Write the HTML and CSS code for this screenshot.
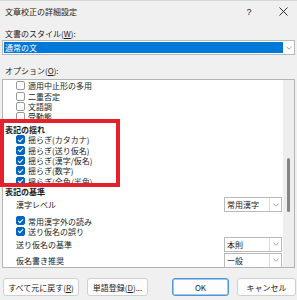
FILE: index.html
```html
<!DOCTYPE html>
<html lang="ja">
<head>
<meta charset="utf-8">
<title>文章校正の詳細設定</title>
<link rel="stylesheet" href="styles.css">
</head>
<body>
<div class="dialog">
  <div class="titlebar">
    <span class="title">文章校正の詳細設定</span>
    <span class="tb-btn help">?</span>
    <span class="tb-btn close"><svg width="9" height="9" viewBox="0 0 9 9"><path d="M0.5 0.5 L8.5 8.5 M8.5 0.5 L0.5 8.5" stroke="#1b1b1b" stroke-width="0.9" fill="none"/></svg></span>
  </div>

  <div class="field-label">文書のスタイル(<u>W</u>):</div>
  <div class="combo main">
    <span class="combo-value selected">通常の文</span>
    <span class="combo-arrow"><svg width="6" height="4" viewBox="0 0 6 4"><path d="M0.5 0.8 L3 3.2 L5.5 0.8" stroke="#8a8a8a" stroke-width="0.8" fill="none"/></svg></span>
  </div>

  <div class="field-label opt">オプション(<u>O</u>):</div>
  <div class="listbox">
    <div class="list-items">
      <div class="row item"><span class="cb"></span>適用中止形の多用</div>
      <div class="row item"><span class="cb"></span>二重否定</div>
      <div class="row item"><span class="cb"></span>文語調</div>
      <div class="row item"><span class="cb"></span>受動態</div>
      <div class="row header first">表記の揺れ</div>
      <div class="row item"><span class="cb on"></span>揺らぎ(カタカナ)</div>
      <div class="row item"><span class="cb on"></span>揺らぎ(送り仮名)</div>
      <div class="row item"><span class="cb on"></span>揺らぎ(漢字/仮名)</div>
      <div class="row item"><span class="cb on"></span>揺らぎ(数字)</div>
      <div class="row item"><span class="cb on"></span>揺らぎ(全角/半角)</div>
      <div class="row header">表記の基準</div>
      <div class="row setting level">
        <span>漢字レベル</span>
        <span class="combo small"><span class="combo-value">常用漢字</span><span class="combo-arrow"><svg width="6" height="4" viewBox="0 0 6 4"><path d="M0.5 0.8 L3 3.2 L5.5 0.8" stroke="#8a8a8a" stroke-width="0.8" fill="none"/></svg></span></span>
      </div>
      <div class="row item after-level"><span class="cb on"></span>常用漢字外の読み</div>
      <div class="row item"><span class="cb on"></span>送り仮名の誤り</div>
      <div class="row setting">
        <span>送り仮名の基準</span>
        <span class="combo small"><span class="combo-value">本則</span><span class="combo-arrow"><svg width="6" height="4" viewBox="0 0 6 4"><path d="M0.5 0.8 L3 3.2 L5.5 0.8" stroke="#8a8a8a" stroke-width="0.8" fill="none"/></svg></span></span>
      </div>
      <div class="row setting last">
        <span>仮名書き推奨</span>
        <span class="combo small"><span class="combo-value">一般</span><span class="combo-arrow"><svg width="6" height="4" viewBox="0 0 6 4"><path d="M0.5 0.8 L3 3.2 L5.5 0.8" stroke="#8a8a8a" stroke-width="0.8" fill="none"/></svg></span></span>
      </div>
    </div>
    <div class="scrollbar"><div class="thumb"></div></div>
  </div>

  <div class="buttons">
    <button class="btn reset">すべて元に戻す(<u>R</u>)</button>
    <button class="btn register">単語登録(<u>D</u>)...</button>
    <button class="btn ok">OK</button>
    <button class="btn cancel">キャンセル</button>
  </div>

  <div class="highlight"></div>
</div>
</body>
</html>
```

FILE: styles.css
```css
html, body {
  margin: 0;
  padding: 0;
}
body {
  width: 297px;
  height: 300px;
  overflow: hidden;
  background: #f0f0f0;
  font-family: "Noto Sans CJK JP", "Noto Sans", sans-serif;
  font-size: 8px;
  color: #1b1b1b;
}
.dialog {
  position: relative;
  width: 297px;
  height: 300px;
}
.titlebar {
  height: 22px;
  display: flex;
  align-items: center;
  padding: 0 6px 0 5px;
  box-sizing: border-box;
  border-top: 1px solid #d6d6d6;
}
.title {
  flex: 1;
  line-height: 11px;
}
.tb-btn {
  width: 16px;
  height: 16px;
  display: flex;
  align-items: center;
  justify-content: center;
}
.help {
  font-family: "Liberation Sans", sans-serif;
  font-size: 9px;
  margin-right: 18px;
}
.field-label {
  height: 11px;
  line-height: 11px;
  padding-left: 5px;
  margin-top: 6px;
}
.field-label.opt {
  margin-top: 10px;
}
.combo {
  display: flex;
  box-sizing: border-box;
  background: #fff;
  border: 1px solid #b9b9b9;
}
.combo.main {
  margin: 1px 0 0 2px;
  width: 293px;
  height: 15px;
  padding: 1px 0 1px 1px;
}
.combo-value {
  flex: 1;
  display: flex;
  align-items: center;
  padding-left: 1px;
  line-height: 11px;
}
.combo-value.selected {
  background: #0078d7;
  color: #fff;
}
.combo-arrow {
  width: 11px;
  display: flex;
  align-items: center;
  justify-content: center;
}
.combo.small {
  width: 58px;
  height: 15px;
  margin-right: 1px;
}
.combo.small .combo-value {
  padding-left: 2px;
}
.combo.small .combo-arrow {
  border-left: 1px solid #dcdcdc;
}
.listbox {
  margin: 3px 0 0 2px;
  width: 293px;
  height: 189px;
  box-sizing: border-box;
  border: 1px solid #b4b4b4;
  background: #fff;
  display: flex;
  overflow: hidden;
}
.list-items {
  flex: 1;
  padding-top: 0.5px;
}
.row {
  height: 10.4px;
  display: flex;
  align-items: center;
  white-space: nowrap;
}
.row.item {
  padding-left: 13px;
}
.row.header {
  padding-left: 2px;
  font-weight: bold;
}
.row.header.first {
  margin-top: 2px;
}
.row.setting {
  height: 15px;
  padding-left: 13px;
  justify-content: space-between;
}
.row.setting.level {
  height: 16px;
}
.row.setting.last {
  margin-top: 1px;
}
.row.after-level {
  margin-top: 3px;
}
.cb {
  position: relative;
  width: 9px;
  height: 9px;
  box-sizing: border-box;
  border: 1px solid #9a9a9a;
  border-radius: 2px;
  background: #fff;
  margin-right: 3px;
  flex: none;
}
.cb.on {
  background: #0067c0;
  border-color: #0067c0;
}
.cb.on::after {
  content: "";
  position: absolute;
  left: 2.2px;
  top: 0.6px;
  width: 2.2px;
  height: 4.2px;
  border: solid #fff;
  border-width: 0 1.1px 1.1px 0;
  transform: rotate(45deg);
}
.scrollbar {
  width: 11px;
  background: #eeeeee;
  flex: none;
}
.thumb {
  margin: 78px 0 0 4px;
  width: 3px;
  height: 54px;
  border-radius: 2px;
  background: #858585;
}
.buttons {
  margin-top: 10px;
  height: 18px;
  display: flex;
  padding: 0 1px 0 3px;
}
.btn {
  height: 18px;
  box-sizing: border-box;
  background: #fdfdfd;
  border: 1px solid #d0d0d0;
  border-radius: 3px;
  font-family: "Noto Sans CJK JP", "Noto Sans", sans-serif;
  font-size: 8px;
  color: #1b1b1b;
  padding: 0;
  line-height: 11px;
}
.btn.reset {
  width: 76px;
}
.btn.register {
  width: 61px;
  margin-left: 8px;
}
.btn.ok {
  width: 57px;
  margin-left: auto;
  border-color: #4d94db;
  box-shadow: inset 0 0 0 0.5px #4d94db;
}
.btn.cancel {
  width: 59px;
  margin-left: 8px;
}
.highlight {
  position: absolute;
  left: 0;
  top: 119px;
  width: 120px;
  height: 68px;
  box-sizing: border-box;
  border: 4px solid #e3202b;
}
```
